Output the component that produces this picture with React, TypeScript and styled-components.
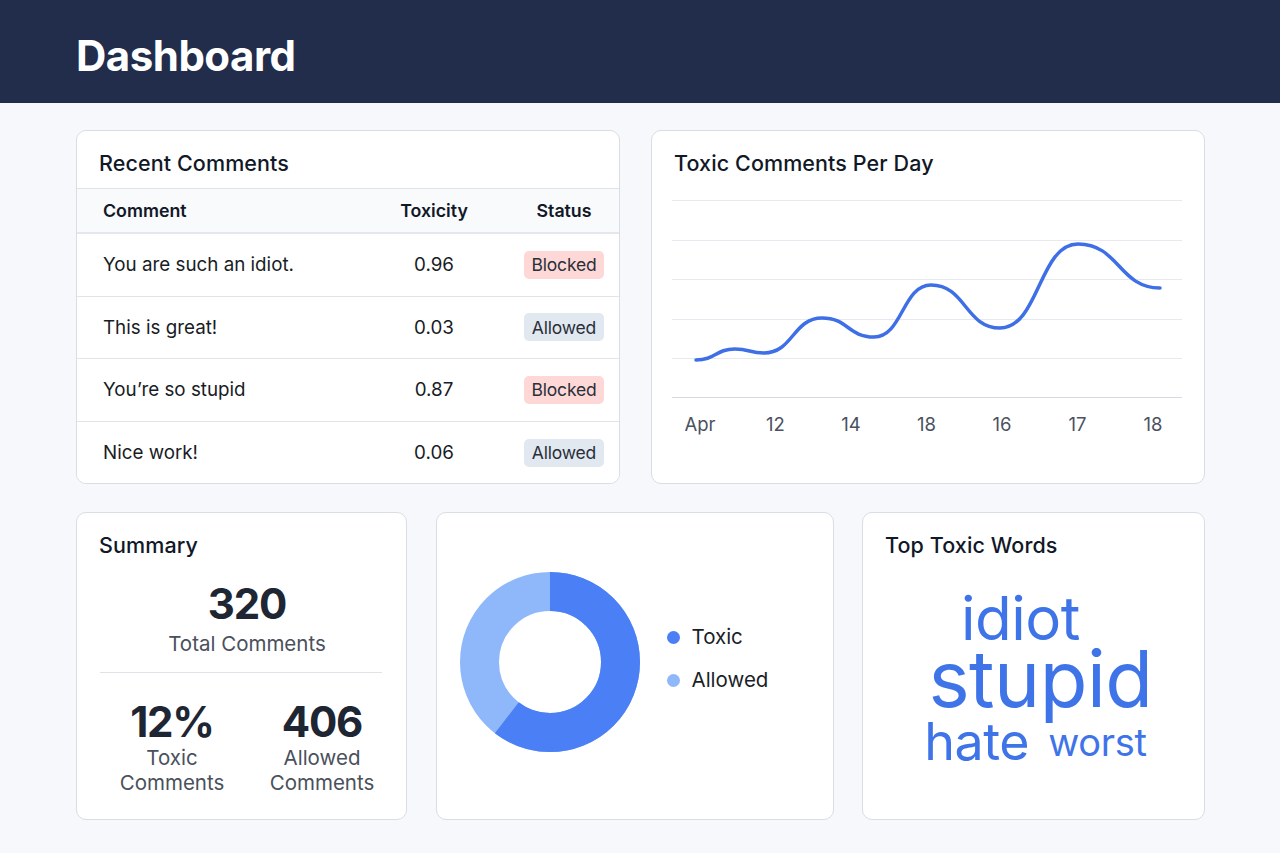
import React from "react";
import styled, { createGlobalStyle } from "styled-components";

const Global = createGlobalStyle`
  html, body { margin: 0; padding: 0; }
  body {
    background: #f6f8fc;
    font-family: Inter, "Noto Sans", "Liberation Sans", sans-serif;
    color: #111827;
    width: 1280px;
    min-height: 853px;
  }
  * { box-sizing: border-box; }
`;

const Header = styled.header`
  height: 103px;
  background: #212d4b;
  display: flex;
  align-items: center;
  padding-left: 76px;
`;

const PageTitle = styled.h1`
  margin: 0;
  color: #ffffff;
  font-size: 42px;
  font-weight: 700;
  letter-spacing: -0.5px;
  line-height: 1;
  padding-top: 8px;
`;

const Main = styled.main`
  padding: 27px 75px 0 76px;
  display: flex;
  flex-direction: column;
  gap: 28px;
`;

const TopRow = styled.div`
  display: grid;
  grid-template-columns: 544px 554px;
  column-gap: 31px;
  height: 354px;
`;

const BottomRow = styled.div`
  display: grid;
  grid-template-columns: 331px 398px 343px;
  column-gap: 28.5px;
  height: 308px;
`;

const Card = styled.section`
  background: #ffffff;
  border: 1px solid #d9dde4;
  border-radius: 10px;
  overflow: hidden;
  display: flex;
  flex-direction: column;
`;

const CardTitle = styled.h2<{ $pl?: number }>`
  margin: 0;
  font-size: 21.5px;
  font-weight: 500;
  line-height: 26px;
  color: #111827;
  letter-spacing: 0.1px;
  padding: 19px 0 0 ${(p) => p.$pl ?? 22}px;
`;

/* ---- Recent comments table ---- */
const TitleBar = styled.div`
  height: 58px;
  border-bottom: 1px solid #dfe3e8;
  flex: none;
`;

const TableRow = styled.div<{ $head?: boolean; $last?: boolean }>`
  display: grid;
  grid-template-columns: 1fr 80px 80px;
  column-gap: 50px;
  align-items: center;
  padding: 0 15px 0 26px;
  height: ${(p) => (p.$head ? 45 : 62.5)}px;
  background: ${(p) => (p.$head ? "#f9fafc" : "#ffffff")};
  border-bottom: ${(p) =>
    p.$last ? "none" : p.$head ? "2px solid #e4e7ec" : "1px solid #e1e4e9"};
  font-size: ${(p) => (p.$head ? 17.8 : 18.8)}px;
  font-weight: ${(p) => (p.$head ? 600 : 400)};
  color: ${(p) => (p.$head ? "#111827" : "#181c25")};
  flex: none;
`;

const Cell = styled.div<{ $center?: boolean }>`
  text-align: ${(p) => (p.$center ? "center" : "left")};
  white-space: nowrap;
`;

const Badge = styled.span<{ $kind: "blocked" | "allowed" }>`
  display: flex;
  align-items: center;
  justify-content: center;
  height: 28px;
  width: 80px;
  border-radius: 5px;
  font-size: 17.5px;
  letter-spacing: -0.2px;
  color: #2a2f3a;
  background: ${(p) => (p.$kind === "blocked" ? "#fdd8d7" : "#e2e8f0")};
`;

/* ---- Line chart ---- */
const ChartSvg = styled.svg`
  display: block;
  margin-top: 14px;
  flex: none;
`;

/* ---- Summary ---- */
const SummaryBody = styled.div`
  display: flex;
  flex-direction: column;
  padding: 0 9px 0 20px;
`;

const BigNum = styled.div`
  font-size: 42px;
  font-weight: 700;
  line-height: 44px;
  color: #1e2533;
  letter-spacing: -1.2px;
  text-align: center;
`;

const StatLabel = styled.div`
  font-size: 20.5px;
  line-height: 25px;
  color: #4a505c;
  text-align: center;
`;

const Divider = styled.hr`
  border: none;
  border-top: 1px solid #dfe3e8;
  margin: 16px 15px 0 3px;
  height: 0;
`;

const StatsGrid = styled.div`
  display: grid;
  grid-template-columns: 1fr 1fr;
  margin-top: 27px;
`;

const Stat = styled.div`
  display: flex;
  flex-direction: column;
  align-items: center;
  gap: 1px;
`;

/* ---- Donut ---- */
const DonutCard = styled(Card)`
  flex-direction: row;
  align-items: center;
  padding: 0 0 8px 22px;
  gap: 26px;
`;

const Legend = styled.ul`
  list-style: none;
  margin: 0 0 7px 0;
  padding: 0;
  display: flex;
  flex-direction: column;
  gap: 19px;
`;

const LegendItem = styled.li`
  display: flex;
  align-items: center;
  gap: 12px;
  font-size: 20.5px;
  line-height: 24px;
  color: #1b1f27;
`;

const Dot = styled.span<{ $color: string }>`
  width: 13px;
  height: 13px;
  border-radius: 50%;
  background: ${(p) => p.$color};
  flex: none;
`;

/* ---- Word cloud ---- */
const Cloud = styled.div`
  margin-top: 30px;
  display: flex;
  flex-direction: column;
  align-items: center;
  color: #3f74e8;
`;

const Word = styled.div<{ $size: number; $lh: number; $shift: number }>`
  font-size: ${(p) => p.$size}px;
  line-height: ${(p) => p.$lh}px;
  font-weight: 400;
  letter-spacing: -0.5px;
  transform: translateX(${(p) => p.$shift}px);
  white-space: nowrap;
`;

const SmallWord = styled.span`
  font-size: 38px;
  vertical-align: 4px;
  margin-left: 19px;
  letter-spacing: -0.3px;
`;

const comments = [
  { text: "You are such an idiot.", tox: "0.96", status: "blocked" as const },
  { text: "This is great!", tox: "0.03", status: "allowed" as const },
  { text: "You\u2019re so stupid", tox: "0.87", status: "blocked" as const },
  { text: "Nice work!", tox: "0.06", status: "allowed" as const },
];

const points: [number, number][] = [
  [44, 170],
  [83, 159],
  [112, 163],
  [170, 128],
  [222, 147],
  [279, 95],
  [348, 138],
  [426, 54],
  [508, 98],
];

function smoothPath(pts: [number, number][]): string {
  let d = `M${pts[0][0]},${pts[0][1]}`;
  for (let i = 1; i < pts.length; i++) {
    const [x0, y0] = pts[i - 1];
    const [x1, y1] = pts[i];
    const dx = x1 - x0;
    d += ` C${x0 + dx * 0.5},${y0} ${x1 - dx * 0.5},${y1} ${x1},${y1}`;
  }
  return d;
}

const gridYs = [10, 50, 89, 129, 168, 207];
const xLabels = ["Apr", "12", "14", "18", "16", "17", "18"];

const LineChart = () => (
  <ChartSvg width={552} height={262} viewBox="0 0 552 262">
    {gridYs.map((y, i) => (
      <line
        key={y}
        x1={20}
        x2={530}
        y1={y + 0.5}
        y2={y + 0.5}
        stroke={i === gridYs.length - 1 ? "#d5d9e0" : "#e6e9ee"}
        strokeWidth={1}
      />
    ))}
    <path
      d={smoothPath(points)}
      fill="none"
      stroke="#3f6fe6"
      strokeWidth={3.5}
      strokeLinecap="round"
    />
    {xLabels.map((l, i) => (
      <text
        key={i}
        x={48 + i * 75.5}
        y={241}
        textAnchor="middle"
        fontSize={18.5}
        fill="#4b5160"
        fontFamily="Inter, 'Noto Sans', sans-serif"
      >
        {l}
      </text>
    ))}
  </ChartSvg>
);

const R = 70.5;
const C = 2 * Math.PI * R;
const toxicFrac = 0.604;

const Donut = () => (
  <svg width={182} height={182} viewBox="0 0 182 182">
    <g transform="rotate(-90 91 91)">
      <circle cx={91} cy={91} r={R} fill="none" stroke="#8fb8fb" strokeWidth={39} />
      <circle
        cx={91}
        cy={91}
        r={R}
        fill="none"
        stroke="#4a7ff5"
        strokeWidth={39}
        strokeDasharray={`${C * toxicFrac} ${C}`}
      />
    </g>
  </svg>
);

export default function App() {
  return (
    <>
      <Global />
      <Header>
        <PageTitle>Dashboard</PageTitle>
      </Header>
      <Main>
        <TopRow>
          <Card>
            <TitleBar>
              <CardTitle>Recent Comments</CardTitle>
            </TitleBar>
            <TableRow $head>
              <Cell>Comment</Cell>
              <Cell $center>Toxicity</Cell>
              <Cell $center>Status</Cell>
            </TableRow>
            {comments.map((c, i) => (
              <TableRow key={i} $last={i === comments.length - 1}>
                <Cell>{c.text}</Cell>
                <Cell $center>{c.tox}</Cell>
                <Badge $kind={c.status}>
                  {c.status === "blocked" ? "Blocked" : "Allowed"}
                </Badge>
              </TableRow>
            ))}
          </Card>
          <Card>
            <CardTitle $pl={22}>Toxic Comments Per Day</CardTitle>
            <LineChart />
          </Card>
        </TopRow>
        <BottomRow>
          <Card>
            <CardTitle>Summary</CardTitle>
            <SummaryBody>
              <BigNum style={{ marginTop: 24 }}>320</BigNum>
              <StatLabel style={{ marginTop: 5 }}>Total Comments</StatLabel>
              <Divider />
              <StatsGrid>
                <Stat>
                  <BigNum>12%</BigNum>
                  <StatLabel>
                    Toxic
                    <br />
                    Comments
                  </StatLabel>
                </Stat>
                <Stat>
                  <BigNum>406</BigNum>
                  <StatLabel>
                    Allowed
                    <br />
                    Comments
                  </StatLabel>
                </Stat>
              </StatsGrid>
            </SummaryBody>
          </Card>
          <DonutCard>
            <Donut />
            <Legend>
              <LegendItem>
                <Dot $color="#4a7ff5" />
                Toxic
              </LegendItem>
              <LegendItem>
                <Dot $color="#8fb8fb" />
                Allowed
              </LegendItem>
            </Legend>
          </DonutCard>
          <Card>
            <CardTitle>Top Toxic Words</CardTitle>
            <Cloud>
              <Word $size={60} $lh={60} $shift={-13}>
                idiot
              </Word>
              <Word $size={78} $lh={62} $shift={7}>
                stupid
              </Word>
              <Word $size={52} $lh={63} $shift={2}>
                hate
                <SmallWord>worst</SmallWord>
              </Word>
            </Cloud>
          </Card>
        </BottomRow>
      </Main>
    </>
  );
}
